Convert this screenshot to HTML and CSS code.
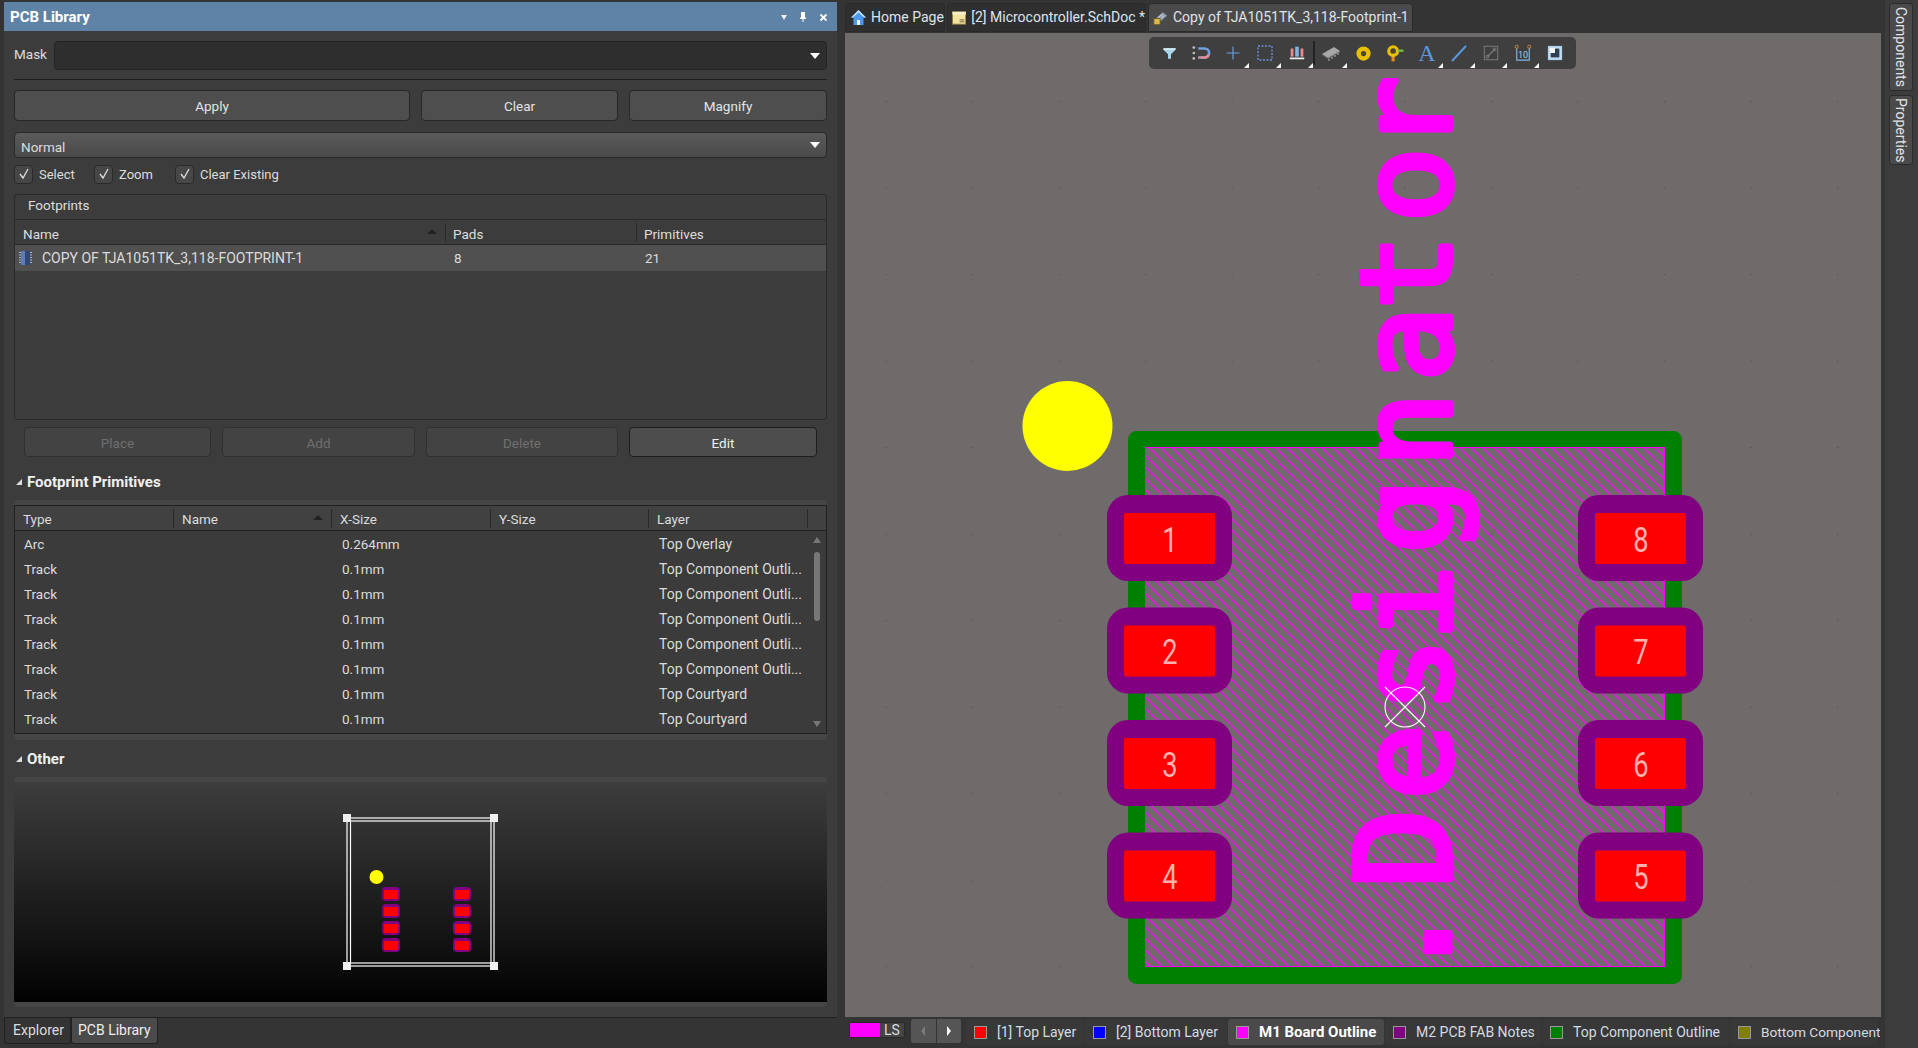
FILE: index.html
```html
<!DOCTYPE html>
<html lang="en">
<head>
<meta charset="utf-8">
<title>PCB Library</title>
<link rel="stylesheet" href="styles.css">
</head>
<body>
<aside class="left">
  <section class="panel">
    <header class="panel-head">
      <span class="panel-title">PCB Library</span>
      <span class="panel-ctrls">
        <i class="tri-down small"></i>
        <svg width="10" height="12" viewBox="0 0 10 12"><path d="M3 1h4v5l1 1v1H5.500v3h-1V8H2V7l1-1z" fill="#fff"/></svg>
        <svg width="9" height="9" viewBox="0 0 9 9"><path d="M1.500 1.500l6 6M7.500 1.500l-6 6" stroke="#fff" stroke-width="1.800"/></svg>
      </span>
    </header>
    <div class="panel-body">
      <div class="mask-row">
        <label class="mask-label">Mask</label>
        <div class="mask-input"><i class="tri-down"></i></div>
      </div>
      <div class="rule"></div>
      <div class="btn-row top-btns">
        <button class="btn">Apply</button>
        <button class="btn">Clear</button>
        <button class="btn">Magnify</button>
      </div>
      <div class="combo"><span>Normal</span><i class="tri-down"></i></div>
      <div class="checks">
        <span class="check chk-a"><i class="box"><svg width="12" height="12" viewBox="0 0 12 12"><path d="M2 6l3 4 5-9" fill="none" stroke="#ddd" stroke-width="1.300"/></svg></i><span class="check-label">Select</span></span>
        <span class="check chk-b"><i class="box"><svg width="12" height="12" viewBox="0 0 12 12"><path d="M2 6l3 4 5-9" fill="none" stroke="#ddd" stroke-width="1.300"/></svg></i><span class="check-label">Zoom</span></span>
        <span class="check"><i class="box"><svg width="12" height="12" viewBox="0 0 12 12"><path d="M2 6l3 4 5-9" fill="none" stroke="#ddd" stroke-width="1.300"/></svg></i><span class="check-label">Clear Existing</span></span>
      </div>
      <div class="group">
        <div class="group-title">Footprints</div>
        <div class="fp-grid fp-head">
          <span class="hcell">Name<i class="tri-up sort"></i></span>
          <span class="hcell sep">Pads</span>
          <span class="hcell sep">Primitives</span>
        </div>
        <div class="fp-grid fp-row">
          <span class="fp-name">
            <svg class="chip" width="15" height="16" viewBox="0 0 15 16"><rect x="3" y="1" width="9" height="14" fill="#5a7db8"/><rect x="7" y="1" width="5" height="14" fill="#2f4772"/><path d="M1 2.500h13M1 5h13M1 7.500h13M1 10h13M1 12.500h13" stroke="#aab4c4" stroke-width="1" stroke-dasharray="2 9"/></svg>
            COPY OF TJA1051TK_3,118-FOOTPRINT-1
          </span>
          <span class="fp-val">8</span>
          <span class="fp-val">21</span>
        </div>
      </div>
      <div class="btn-row low-btns">
        <button class="btn off">Place</button>
        <button class="btn off">Add</button>
        <button class="btn off">Delete</button>
        <button class="btn edit">Edit</button>
      </div>
      <div class="section first-section"><i class="tri-corner"></i>Footprint Primitives</div>
      <div class="tbl-wrap">
        <div class="tbl">
          <div class="tbl-head tgrid">
            <span class="th">Type</span>
            <span class="th sep">Name<i class="tri-up sort"></i></span>
            <span class="th sep">X-Size</span>
            <span class="th sep">Y-Size</span>
            <span class="th sep">Layer</span>
          </div>
          <div class="tbl-body">
            <div class="rows">
              <div class="tgrid row"><span>Arc</span><span></span><span>0.264mm</span><span></span><span>Top Overlay</span></div>
              <div class="tgrid row"><span>Track</span><span></span><span>0.1mm</span><span></span><span>Top Component Outli...</span></div>
              <div class="tgrid row"><span>Track</span><span></span><span>0.1mm</span><span></span><span>Top Component Outli...</span></div>
              <div class="tgrid row"><span>Track</span><span></span><span>0.1mm</span><span></span><span>Top Component Outli...</span></div>
              <div class="tgrid row"><span>Track</span><span></span><span>0.1mm</span><span></span><span>Top Component Outli...</span></div>
              <div class="tgrid row"><span>Track</span><span></span><span>0.1mm</span><span></span><span>Top Component Outli...</span></div>
              <div class="tgrid row"><span>Track</span><span></span><span>0.1mm</span><span></span><span>Top Courtyard</span></div>
              <div class="tgrid row"><span>Track</span><span></span><span>0.1mm</span><span></span><span>Top Courtyard</span></div>
            </div>
            <div class="scroll">
              <i class="tri-up tiny"></i>
              <div class="thumb-track"><div class="thumb"></div></div>
              <i class="tri-down tiny"></i>
            </div>
          </div>
        </div>
      </div>
      <div class="section other-section"><i class="tri-corner"></i>Other</div>
      <div class="preview-wrap">
        <div class="preview">
          <svg class="preview-svg" width="813" height="220" viewBox="14 782 813 220">
            <g fill="none" stroke="#fff" stroke-width="1.200">
              <rect x="347" y="818" width="147" height="148"/>
              <rect x="350.500" y="821" width="140.500" height="142"/>
            </g>
            <g fill="#f0f0f0">
              <rect x="343" y="814" width="8" height="8"/><rect x="490" y="814" width="8" height="8"/>
              <rect x="343" y="962" width="8" height="8"/><rect x="490" y="962" width="8" height="8"/>
            </g>
            <circle cx="376.500" cy="877" r="7" fill="#ff0"/>
            <g fill="#800080">
              <rect x="382" y="887" width="18" height="14" rx="4"/><rect x="382" y="904" width="18" height="14" rx="4"/>
              <rect x="382" y="921" width="18" height="14" rx="4"/><rect x="382" y="938" width="18" height="14" rx="4"/>
              <rect x="453" y="887" width="18" height="14" rx="4"/><rect x="453" y="904" width="18" height="14" rx="4"/>
              <rect x="453" y="921" width="18" height="14" rx="4"/><rect x="453" y="938" width="18" height="14" rx="4"/>
            </g>
            <g fill="#f00">
              <rect x="384" y="890" width="14" height="9"/><rect x="384" y="907" width="14" height="9"/>
              <rect x="384" y="924" width="14" height="9"/><rect x="384" y="941" width="14" height="9"/>
              <rect x="455" y="890" width="14" height="9"/><rect x="455" y="907" width="14" height="9"/>
              <rect x="455" y="924" width="14" height="9"/><rect x="455" y="941" width="14" height="9"/>
            </g>
          </svg>
        </div>
      </div>
    </div>
  </section>
  <nav class="bottom-tabs">
    <span class="btab">Explorer</span>
    <span class="btab on">PCB Library</span>
  </nav>
</aside>

<main class="main">
  <nav class="doc-tabs">
    <span class="doc-tab t1">
      <svg width="17" height="17" viewBox="0 0 17 17"><path d="M8.500 1L1 8.500h2.500V16h3.500v-5h3v5h3.500V8.500H16z" fill="#4d9be8"/><path d="M8.500 1L1 8.500h2L8.500 3.500 14 8.500h2z" fill="#bfe0ff"/><rect x="7" y="11" width="3" height="5" fill="#eef6ff"/></svg>
      Home Page
    </span>
    <span class="doc-tab t2">
      <svg width="15" height="14" viewBox="0 0 15 14"><rect x="0.500" y="0.500" width="14" height="13" fill="#f5e3a0" stroke="#8a7a4a"/><rect x="0.500" y="0.500" width="14" height="3" fill="#f9f0c8"/><path d="M8 9h5M8 11h5" stroke="#6b5f3a"/></svg>
      [2] Microcontroller.SchDoc *
    </span>
    <span class="doc-tab t3">
      <svg width="16" height="16" viewBox="0 0 18 17"><path d="M4 8l7-6 5 4-7 6z" fill="#8b97a8"/><path d="M6 8l5-4M8 9.500l5-4" stroke="#dfe5ee"/><rect x="1" y="9" width="7" height="7" fill="#d8b84a" stroke="#6d5a1e"/></svg>
      Copy of TJA1051TK_3,118-Footprint-1
    </span>
  </nav>
  <div class="canvas">
    <svg class="board" width="1036" height="984" viewBox="845 33 1036 984">
      <defs>
        <pattern id="hatch" patternUnits="userSpaceOnUse" width="11.500" height="11.500">
          <path d="M-2-2L13.500 13.500" stroke="#f0f" stroke-width="1.300"/>
        </pattern>
        <pattern id="grid" patternUnits="userSpaceOnUse" x="1318" y="101" width="86.500" height="86.500">
          <rect width="1.200" height="1.200" fill="#555252"/>
        </pattern>
      </defs>
      <rect x="845" y="33" width="1036" height="984" fill="url(#grid)"/>
      <rect x="1136.500" y="439.500" width="537" height="536" fill="none" stroke="#008000" stroke-width="17" stroke-linejoin="round"/>
      <rect x="1145.500" y="447.500" width="519" height="519" fill="url(#hatch)" stroke="#f0f" stroke-width="1"/>
      <circle cx="1067.500" cy="426" r="45" fill="#ff0"/>
      <g fill="#800080">
        <rect x="1107" y="495" width="125" height="86" rx="21"/><rect x="1107" y="607.500" width="125" height="86" rx="21"/>
        <rect x="1107" y="720" width="125" height="86" rx="21"/><rect x="1107" y="832.500" width="125" height="86" rx="21"/>
        <rect x="1578" y="495" width="125" height="86" rx="21"/><rect x="1578" y="607.500" width="125" height="86" rx="21"/>
        <rect x="1578" y="720" width="125" height="86" rx="21"/><rect x="1578" y="832.500" width="125" height="86" rx="21"/>
      </g>
      <g fill="#f00">
        <rect x="1124" y="513" width="91" height="51" rx="2"/><rect x="1124" y="625.500" width="91" height="51" rx="2"/>
        <rect x="1124" y="738" width="91" height="51" rx="2"/><rect x="1124" y="850.500" width="91" height="51" rx="2"/>
        <rect x="1595" y="513" width="91" height="51" rx="2"/><rect x="1595" y="625.500" width="91" height="51" rx="2"/>
        <rect x="1595" y="738" width="91" height="51" rx="2"/><rect x="1595" y="850.500" width="91" height="51" rx="2"/>
      </g>
      <g class="digit">
        <text transform="translate(1170 552) scale(.78 1)">1</text>
        <text transform="translate(1170 664) scale(.78 1)">2</text>
        <text transform="translate(1170 777) scale(.78 1)">3</text>
        <text transform="translate(1170 889) scale(.78 1)">4</text>
        <text transform="translate(1641 552) scale(.78 1)">8</text>
        <text transform="translate(1641 664) scale(.78 1)">7</text>
        <text transform="translate(1641 777) scale(.78 1)">6</text>
        <text transform="translate(1641 889) scale(.78 1)">5</text>
      </g>
      <text class="designator dot" transform="translate(1450 0) rotate(-90)" x="-989">.</text>
      <text class="designator" transform="translate(1450 0) rotate(-90)" x="-888 -799.500 -712.500 -640.500 -553.500 -467.500 -381.500 -309.500 -222.500 -151.500"><tspan class="cap">D</tspan>esignator</text>
      <g fill="none" stroke="#fff" stroke-width="1.100">
        <circle cx="1405" cy="707" r="20"/>
        <path d="M1385 687l40 40M1425 687l-40 40"/>
      </g>
    </svg>
    <div class="toolbar">
      <span class="tool"><svg width="15" height="15" viewBox="0 0 20 20"><path d="M2 3h16v2l-6 6v6H8v-6L2 5z" fill="#a8d4e8"/><path d="M2 3h16v2H2z" fill="#d8eef8"/></svg></span>
      <span class="tool"><svg width="22" height="18" viewBox="0 0 24 20"><circle cx="4" cy="4" r="1.500" fill="#bbb"/><circle cx="4" cy="10" r="1.500" fill="#bbb"/><circle cx="4" cy="16" r="1.500" fill="#bbb"/><path d="M9 5h7a5 5 0 010 10H9" fill="none" stroke="#6f9fdc" stroke-width="3"/><path d="M13 15h3a5 5 0 004.600-3" fill="none" stroke="#e58a90" stroke-width="3"/><path d="M9 14h5v2H9z" fill="#e58a90"/></svg></span>
      <span class="tool tri"><svg width="16" height="16" viewBox="0 0 20 20"><path d="M10 2v16M2 10h16" stroke="#6f9fdc" stroke-width="1.400"/></svg></span>
      <span class="tool tri"><svg width="20" height="20" viewBox="0 0 20 20"><rect x="3" y="3" width="14" height="14" fill="none" stroke="#6f8fe0" stroke-width="1.300" stroke-dasharray="2 1.500"/></svg></span>
      <span class="tool tri"><svg width="18" height="18" viewBox="0 0 20 20"><rect x="3" y="5" width="3" height="9" fill="#ec8a90"/><rect x="8" y="3" width="4" height="11" fill="#7fb4e0"/><rect x="14" y="5" width="3" height="9" fill="#ec8a90"/><rect x="2" y="15" width="16" height="2" fill="#e8e8e8"/></svg></span>
      <i class="tool-sep"></i>
      <span class="tool tri"><svg width="22" height="20" viewBox="0 0 22 20"><path d="M2 11l12-7 6 4-12 7z" fill="#a6a6a6"/><path d="M2 11l6 4v1l-6-4z" fill="#6d6d6d"/><path d="M8 15l12-7v1L8 16z" fill="#7d7d7d"/><path d="M9 16v2M12 14v2M15 12v2M18 10v2" stroke="#bbb"/></svg></span>
      <span class="tool"><svg width="15" height="15" viewBox="0 0 20 20"><circle cx="10" cy="10" r="6.500" fill="none" stroke="#e8c000" stroke-width="6"/><circle cx="10" cy="10" r="2" fill="#5a4a10"/></svg></span>
      <span class="tool"><svg width="19" height="19" viewBox="0 0 24 24"><rect x="7" y="12" width="4" height="10" fill="#e08a20"/><circle cx="9" cy="9" r="5.500" fill="none" stroke="#e8c000" stroke-width="4"/><circle cx="9" cy="9" r="1.500" fill="#5a4a10"/><path d="M15 7h7v3h-7z" fill="#6cc04a"/></svg></span>
      <span class="tool tri"><span class="tool-a">A</span></span>
      <span class="tool tri"><svg width="20" height="20" viewBox="0 0 20 20"><path d="M3 18L17 3" stroke="#5a97dc" stroke-width="2"/></svg></span>
      <span class="tool tri"><svg width="18" height="18" viewBox="0 0 20 20"><rect x="2.500" y="2.500" width="15" height="15" fill="none" stroke="#808080"/><path d="M6 14l8-8" stroke="#777" stroke-width="1.500"/><circle cx="14" cy="6" r="1.500" fill="none" stroke="#888"/><circle cx="6" cy="14" r="1.500" fill="none" stroke="#888"/></svg></span>
      <span class="tool tri"><svg width="18" height="18" viewBox="0 0 20 20"><path d="M3 3v15h14V3" fill="none" stroke="#7fb4e0" stroke-width="1.300"/><circle cx="3" cy="3" r="1.800" fill="#3f3f40" stroke="#d08a3a"/><circle cx="17" cy="3" r="1.800" fill="#3f3f40" stroke="#d08a3a"/><text x="10" y="15" class="ten-label">10</text></svg></span>
      <span class="tool"><svg width="16" height="16" viewBox="0 0 18 18"><rect x="1" y="1" width="16" height="16" fill="#a8d4f0"/><rect x="3" y="3" width="12" height="12" fill="#f0f6fa"/><path d="M9 4h5v10H4V9h5z" fill="#2b3f55"/></svg></span>
    </div>
  </div>
  <div class="layers">
    <div class="ls"><i class="ls-swatch"></i><span>LS</span></div>
    <div class="nav-btns"><i class="arr-left"></i><i class="arr-right"></i></div>
    <div class="layer-tabs">
      <span class="ltab"><i class="sw red"></i>[1] Top Layer</span>
      <span class="ltab"><i class="sw blue"></i>[2] Bottom Layer</span>
      <span class="ltab on"><i class="sw mag"></i>M1 Board Outline</span>
      <span class="ltab"><i class="sw pur"></i>M2 PCB FAB Notes</span>
      <span class="ltab"><i class="sw grn"></i>Top Component Outline</span>
      <span class="ltab last"><i class="sw oli"></i>Bottom Component</span>
    </div>
  </div>
</main>

<aside class="side">
  <span class="side-tab st1">Components</span>
  <span class="side-tab st2">Properties</span>
</aside>
</body>
</html>
```

FILE: styles.css
```css
* { box-sizing: border-box; }
html, body { margin: 0; height: 100%; }
body {
  width: 1918px; height: 1048px; overflow: hidden; display: flex;
  background: #343434; color: #dcdcdc;
  font: 13.5px/1.2 Roboto, "Liberation Sans", sans-serif;
}
i { display: block; font-style: normal; }

/* triangles */
.tri-down { width: 0; height: 0; border: 5px solid transparent; border-top: 6px solid #fff; border-bottom: 0; }
.tri-down.small { border-width: 5px 3px 0; border-top-color: #eee; }
.tri-up { width: 0; height: 0; border: 5px solid transparent; border-bottom: 5px solid #222; border-top: 0; }
.tri-corner { width: 0; height: 0; border-style: solid; border-width: 0 0 6px 6px; border-color: transparent transparent #ddd transparent; }

/* left */
.left { width: 840px; padding: 2px 0 0 4px; display: flex; flex-direction: column; flex: none; }
.panel { width: 833px; height: 1015px; background: #3c3c3c; flex: none; }
.panel-head { height: 29px; background: #5f83a6; display: flex; align-items: center; justify-content: space-between; padding: 1px 9px 0 6px; }
.panel-title { color: #fff; font-weight: 700; font-size: 15px; }
.panel-ctrls { display: flex; align-items: center; gap: 11px; }
.panel-body { padding: 10px 10px 0; }
.mask-row { display: flex; height: 29px; }
.mask-label { width: 40px; line-height: 27px; }
.mask-input { flex: 1; background: #2e2e2e; border: 1px solid #232323; border-radius: 4px; display: flex; align-items: center; justify-content: flex-end; padding-right: 6px; }
.rule { height: 1px; margin-top: 9px; background: #202020; }
.btn-row { display: grid; column-gap: 11px; }
.top-btns { margin-top: 10px; height: 31px; grid-template-columns: 396px 197px 198px; }
.low-btns { margin-top: 7px; height: 30px; padding: 0 10px; grid-template-columns: 187px 193px 192px 188px; }
.btn { background: #4e4e4e; border: 1px solid #282828; border-radius: 4px; color: #e4e4e4; font: inherit; padding: 2px 0 0; }
.btn.off { background: #434343; border-color: #303030; color: #6f6f6f; }
.btn.edit { background: #4d4d4d; border-color: #1e1e1e; color: #f0f0f0; }
.combo { margin-top: 11px; height: 26px; border: 1px solid #282828; border-radius: 4px; background: linear-gradient(#5a5a5a, #4a4a4a); display: flex; align-items: center; justify-content: space-between; padding: 4px 6px 0 6px; }
.combo .tri-down { margin-top: -4px; }
.checks { margin-top: 6px; height: 20px; display: flex; align-items: center; font-size: 13px; }
.check { display: flex; align-items: center; gap: 6px; }
.check-label { padding-top: 2px; }
.chk-a { width: 80px; }
.chk-b { width: 81px; }
.box { width: 19px; height: 19px; background: #474747; border: 1px solid #2a2a2a; border-radius: 4px; display: flex; align-items: center; justify-content: center; }
.group { margin-top: 10px; height: 226px; border: 1px solid #2a2a2a; border-radius: 3px; }
.group-title { height: 25px; padding-left: 13px; line-height: 21px; border-bottom: 1px solid #2a2a2a; }
.fp-grid { display: grid; grid-template-columns: 430px 191px 1fr; }
.fp-head { height: 25px; border-bottom: 1px solid #2a2a2a; align-items: center; }
.hcell { position: relative; padding-left: 8px; height: 19px; line-height: 22px; }
.hcell.sep { border-left: 1px solid #2a2a2a; padding-left: 7px; }
.sort { position: absolute; right: 8px; top: 6px; }
.fp-row { height: 26px; background: #505050; align-items: center; padding-top: 1px; }
.fp-name { display: flex; align-items: center; gap: 9px; padding-left: 3px; font-size: 14px; white-space: nowrap; }
.fp-val { padding-left: 9px; }
.chip { flex: none; }
.section { display: flex; align-items: center; gap: 5px; height: 20px; font-size: 15px; font-weight: 700; color: #f0f0f0; padding-left: 2px; }
.first-section { margin-top: 15px; }
.other-section { margin-top: 9px; }
.tbl-wrap { margin-top: 8px; height: 240px; padding: 5px 0 6px; background: #454545; border-radius: 4px; }
.tbl { height: 229px; background: #3b3b3b; border: 1px solid #202020; }
.tgrid { display: grid; grid-template-columns: 158px 158px 159px 158px 1fr; }
.tbl-head { height: 25px; align-items: center; border-bottom: 1px solid #202020; background: #414141; }
.th { position: relative; height: 19px; line-height: 21px; padding-left: 8px; }
.th.sep { border-left: 1px solid #2a2a2a; }
.tbl-head .th:last-child { border-right: 1px solid #2a2a2a; margin-right: 18px; }
.tbl-body { display: flex; height: 202px; }
.rows { flex: 1; padding-top: 1px; }
.row { height: 25px; align-items: center; }
.row span { padding-left: 9px; white-space: nowrap; }
.row span:nth-child(n+3) { padding-left: 11px; }
.row span:last-child { font-size: 14px; }
.scroll { width: 19px; flex: none; display: flex; flex-direction: column; align-items: center; padding: 6px 0; gap: 6px; }
.tiny { border-width: 0 4px 6px; border-bottom-color: #777; }
.tri-down.tiny { border-width: 6px 4px 0; border-top-color: #777; }
.thumb-track { flex: 1; }
.thumb { width: 6px; height: 69px; border-radius: 3px; background: #777; margin-top: 3px; }
.preview-wrap { margin-top: 8px; height: 230px; padding: 5px 0; background: #454545; border-radius: 4px; }
.preview { height: 220px; background: linear-gradient(#3d3d3d, #020202); }
.preview-svg { display: block; }
.bottom-tabs { display: flex; height: 26px; border-top: 1px solid #222; margin-right: 3px; font-size: 14px; }
.btab { padding: 0 0 0 8px; height: 26px; line-height: 25px; width: 67px; background: #343434; border-right: 1px solid #222; border-left: 1px solid #222; border-bottom: 1px solid #222; border-radius: 0 0 3px 3px; white-space: nowrap; }
.btab.on { width: 87px; background: #4a4a4a; color: #eee; padding-left: 6px; }

/* main */
.main { width: 1045px; flex: none; display: flex; flex-direction: column; }
.doc-tabs { height: 33px; padding: 3px 0 0 5px; display: flex; gap: 2px; flex: none; }
.doc-tab { display: flex; align-items: center; gap: 4px; height: 29px; padding-left: 4px; background: #2f2f2f; border-radius: 4px 4px 0 0; border: 1px solid #2a2a2a; color: #dfe4ea; font-size: 14px; white-space: nowrap; }
.t1 { width: 100px; }
.t2 { width: 199px; gap: 5px; }
.t3 { width: 265px; background: #4a4a4a; }
.canvas { position: relative; margin-left: 5px; width: 1036px; height: 984px; background: #6f6b6b; flex: none; }
.board { display: block; }
.digit text { font: 400 35px Roboto, "Liberation Sans", sans-serif; fill: #ffb0b0; text-anchor: middle; }
.designator { font: 125px "DejaVu Sans Mono", monospace; fill: #f0f; stroke: #f0f; stroke-width: 6; stroke-linejoin: round; }
.designator .cap { font-size: 132px; }
.designator.dot { font-size: 156px; stroke-width: 5; }
.toolbar { position: absolute; left: 304px; top: 4px; width: 427px; height: 32px; background: #3f3f40; border-radius: 5px; display: flex; align-items: center; padding-left: 4px; }
.tool { position: relative; width: 32px; height: 32px; display: flex; align-items: center; justify-content: center; flex: none; }
.tool.tri::after { content: ""; position: absolute; right: 0; bottom: 1px; border-style: solid; border-width: 0 0 5px 5px; border-color: transparent transparent #fff transparent; }
.tool-sep { width: 2px; height: 24px; background: #222; flex: none; }
.tool-a { font: 24px/1.1 "Liberation Serif", serif; color: #5a97dc; }
.ten-label { font: 10px Roboto, sans-serif; fill: #9ccbe8; text-anchor: middle; }

/* layers */
.layers { height: 31px; flex: none; display: flex; align-items: flex-start; padding: 2px 0 0 9px; width: 1040px; overflow: hidden; background: #343434; font-size: 14px; }
.ls { display: flex; margin-top: 3px; width: 56px; height: 16px; background: #444; border: 1px solid #2a2a2a; border-radius: 2px; flex: none; }
.ls-swatch { width: 30px; background: #f0f; }
.ls span { flex: 1; text-align: center; line-height: 14px; }
.nav-btns { margin-left: 6px; width: 50px; height: 24px; flex: none; background: #555; border-radius: 3px; display: flex; }
.arr-left, .arr-right { flex: 1; position: relative; }
.arr-left { border-right: 1px solid #333; }
.arr-left::after, .arr-right::after { content: ""; position: absolute; top: 7px; left: 10px; border-style: solid; }
.arr-left::after { border-width: 5px 4px 5px 0; border-color: transparent #7a7a7a transparent transparent; }
.arr-right::after { border-width: 5px 0 5px 4px; border-color: transparent transparent transparent #fff; }
.layer-tabs { margin-left: 5px; display: grid; grid-template-columns: 118px 142px 156px 156px 187px 148px; column-gap: 1px; flex: none; }
.ltab { height: 26px; background: #383838; border-radius: 3px; display: flex; align-items: center; gap: 10px; padding-left: 8px; white-space: nowrap; color: #d6dbe0; }
.ltab.on { background: #4a4a4a; color: #fff; font-weight: 700; font-size: 15px; }
.ltab.last { font-size: 13.7px; }
.sw { width: 13px; height: 13px; border: 1px solid #999; flex: none; }
.red { background: #f00; } .blue { background: #00f; } .mag { background: #f0f; }
.pur { background: #800080; } .grn { background: #008000; } .oli { background: #808000; }

/* side */
.side { width: 33px; flex: none; background: #3c3c3c; padding: 3px 0 0 4px; display: flex; flex-direction: column; gap: 4px; font-size: 14px; }
.side-tab { width: 24px; writing-mode: vertical-rl; background: #4a4a4a; border: 1px solid #2a2a2a; border-radius: 3px; display: flex; align-items: center; justify-content: center; color: #e4e4e4; }
.st1 { height: 88px; }
.st2 { height: 70px; }
```
